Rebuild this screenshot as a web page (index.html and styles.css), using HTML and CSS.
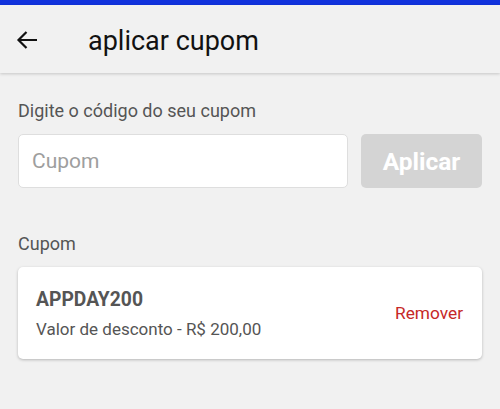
FILE: index.html
```html
<!DOCTYPE html>
<html lang="pt-BR">
<head>
  <meta charset="UTF-8">
  <meta name="viewport" content="width=device-width, initial-scale=1.0">
  <title>aplicar cupom</title>
  <link rel="stylesheet" href="styles.css">
</head>
<body>
  <div class="barra-status"></div>
  <header class="topo">
    <button class="voltar" title="Voltar">
      <svg width="22" height="22" viewBox="0 0 22 22">
        <path d="M21 11H2.5M10.5 3L2.5 11l8 8" fill="none" stroke="#111" stroke-width="2.2"/>
      </svg>
    </button>
    <h1>aplicar cupom</h1>
  </header>

  <main>
    <label class="rotulo" for="cupom">Digite o código do seu cupom</label>
    <div class="linha-cupom">
      <input id="cupom" class="campo" placeholder="Cupom">
      <button class="aplicar" disabled>Aplicar</button>
    </div>

    <p class="rotulo secao">Cupom</p>
    <div class="cartao">
      <div>
        <div class="codigo">APPDAY200</div>
        <div class="valor">Valor de desconto - R$ 200,00</div>
      </div>
      <button class="remover">Remover</button>
    </div>
  </main>
</body>
</html>
```

FILE: styles.css
```css
body {
  margin: 0;
  font-family: Roboto, "Noto Sans", sans-serif;
  background: #f1f1f1;
  color: #555;
}

.barra-status {
  height: 5px;
  background: #1133dd;
}

.topo {
  height: 68px;
  display: flex;
  align-items: center;
  background: #f1f1f1;
  box-shadow: 0 1px 3px rgba(0,0,0,0.18);
  position: relative;
}

.voltar {
  background: none;
  border: none;
  padding: 0;
  margin: 2px 0 0 16px;
  width: 22px;
  height: 22px;
  display: flex;
  cursor: pointer;
}

.topo h1 {
  margin: 3px 0 0 50px;
  font-size: 27px;
  font-weight: 400;
  color: #111;
}

main {
  padding: 27px 18px;
}

.rotulo {
  display: block;
  font-size: 18px;
  line-height: 21px;
  color: #555;
  margin: 0 0 13px;
}

.linha-cupom {
  display: flex;
  gap: 13px;
}

.campo {
  flex: 1;
  height: 54px;
  box-sizing: border-box;
  border: 1px solid #dedede;
  border-radius: 5px;
  background: #fff;
  padding: 0 13px;
  font-family: inherit;
  font-size: 21px;
  color: #333;
  outline: none;
}

.campo::placeholder {
  color: #9e9e9e;
}

.aplicar {
  width: 121px;
  height: 54px;
  border: none;
  border-radius: 5px;
  background: #d4d4d4;
  color: #fff;
  font-family: inherit;
  font-size: 24.5px;
  font-weight: 700;
}

.secao {
  margin-top: 45px;
  margin-bottom: 13px;
}

.cartao {
  background: #fff;
  border-radius: 5px;
  box-shadow: 0 1px 3px rgba(0,0,0,0.25);
  height: 92px;
  box-sizing: border-box;
  padding: 0 19px 0 18px;
  display: flex;
  align-items: center;
  justify-content: space-between;
}

.codigo {
  font-size: 19.3px;
  font-weight: 700;
  color: #555;
  margin-bottom: 8px;
}

.valor {
  font-size: 17px;
  color: #555;
}

.remover {
  background: none;
  border: none;
  padding: 0;
  color: #c62828;
  font-family: inherit;
  font-size: 17.3px;
  cursor: pointer;
}
```
